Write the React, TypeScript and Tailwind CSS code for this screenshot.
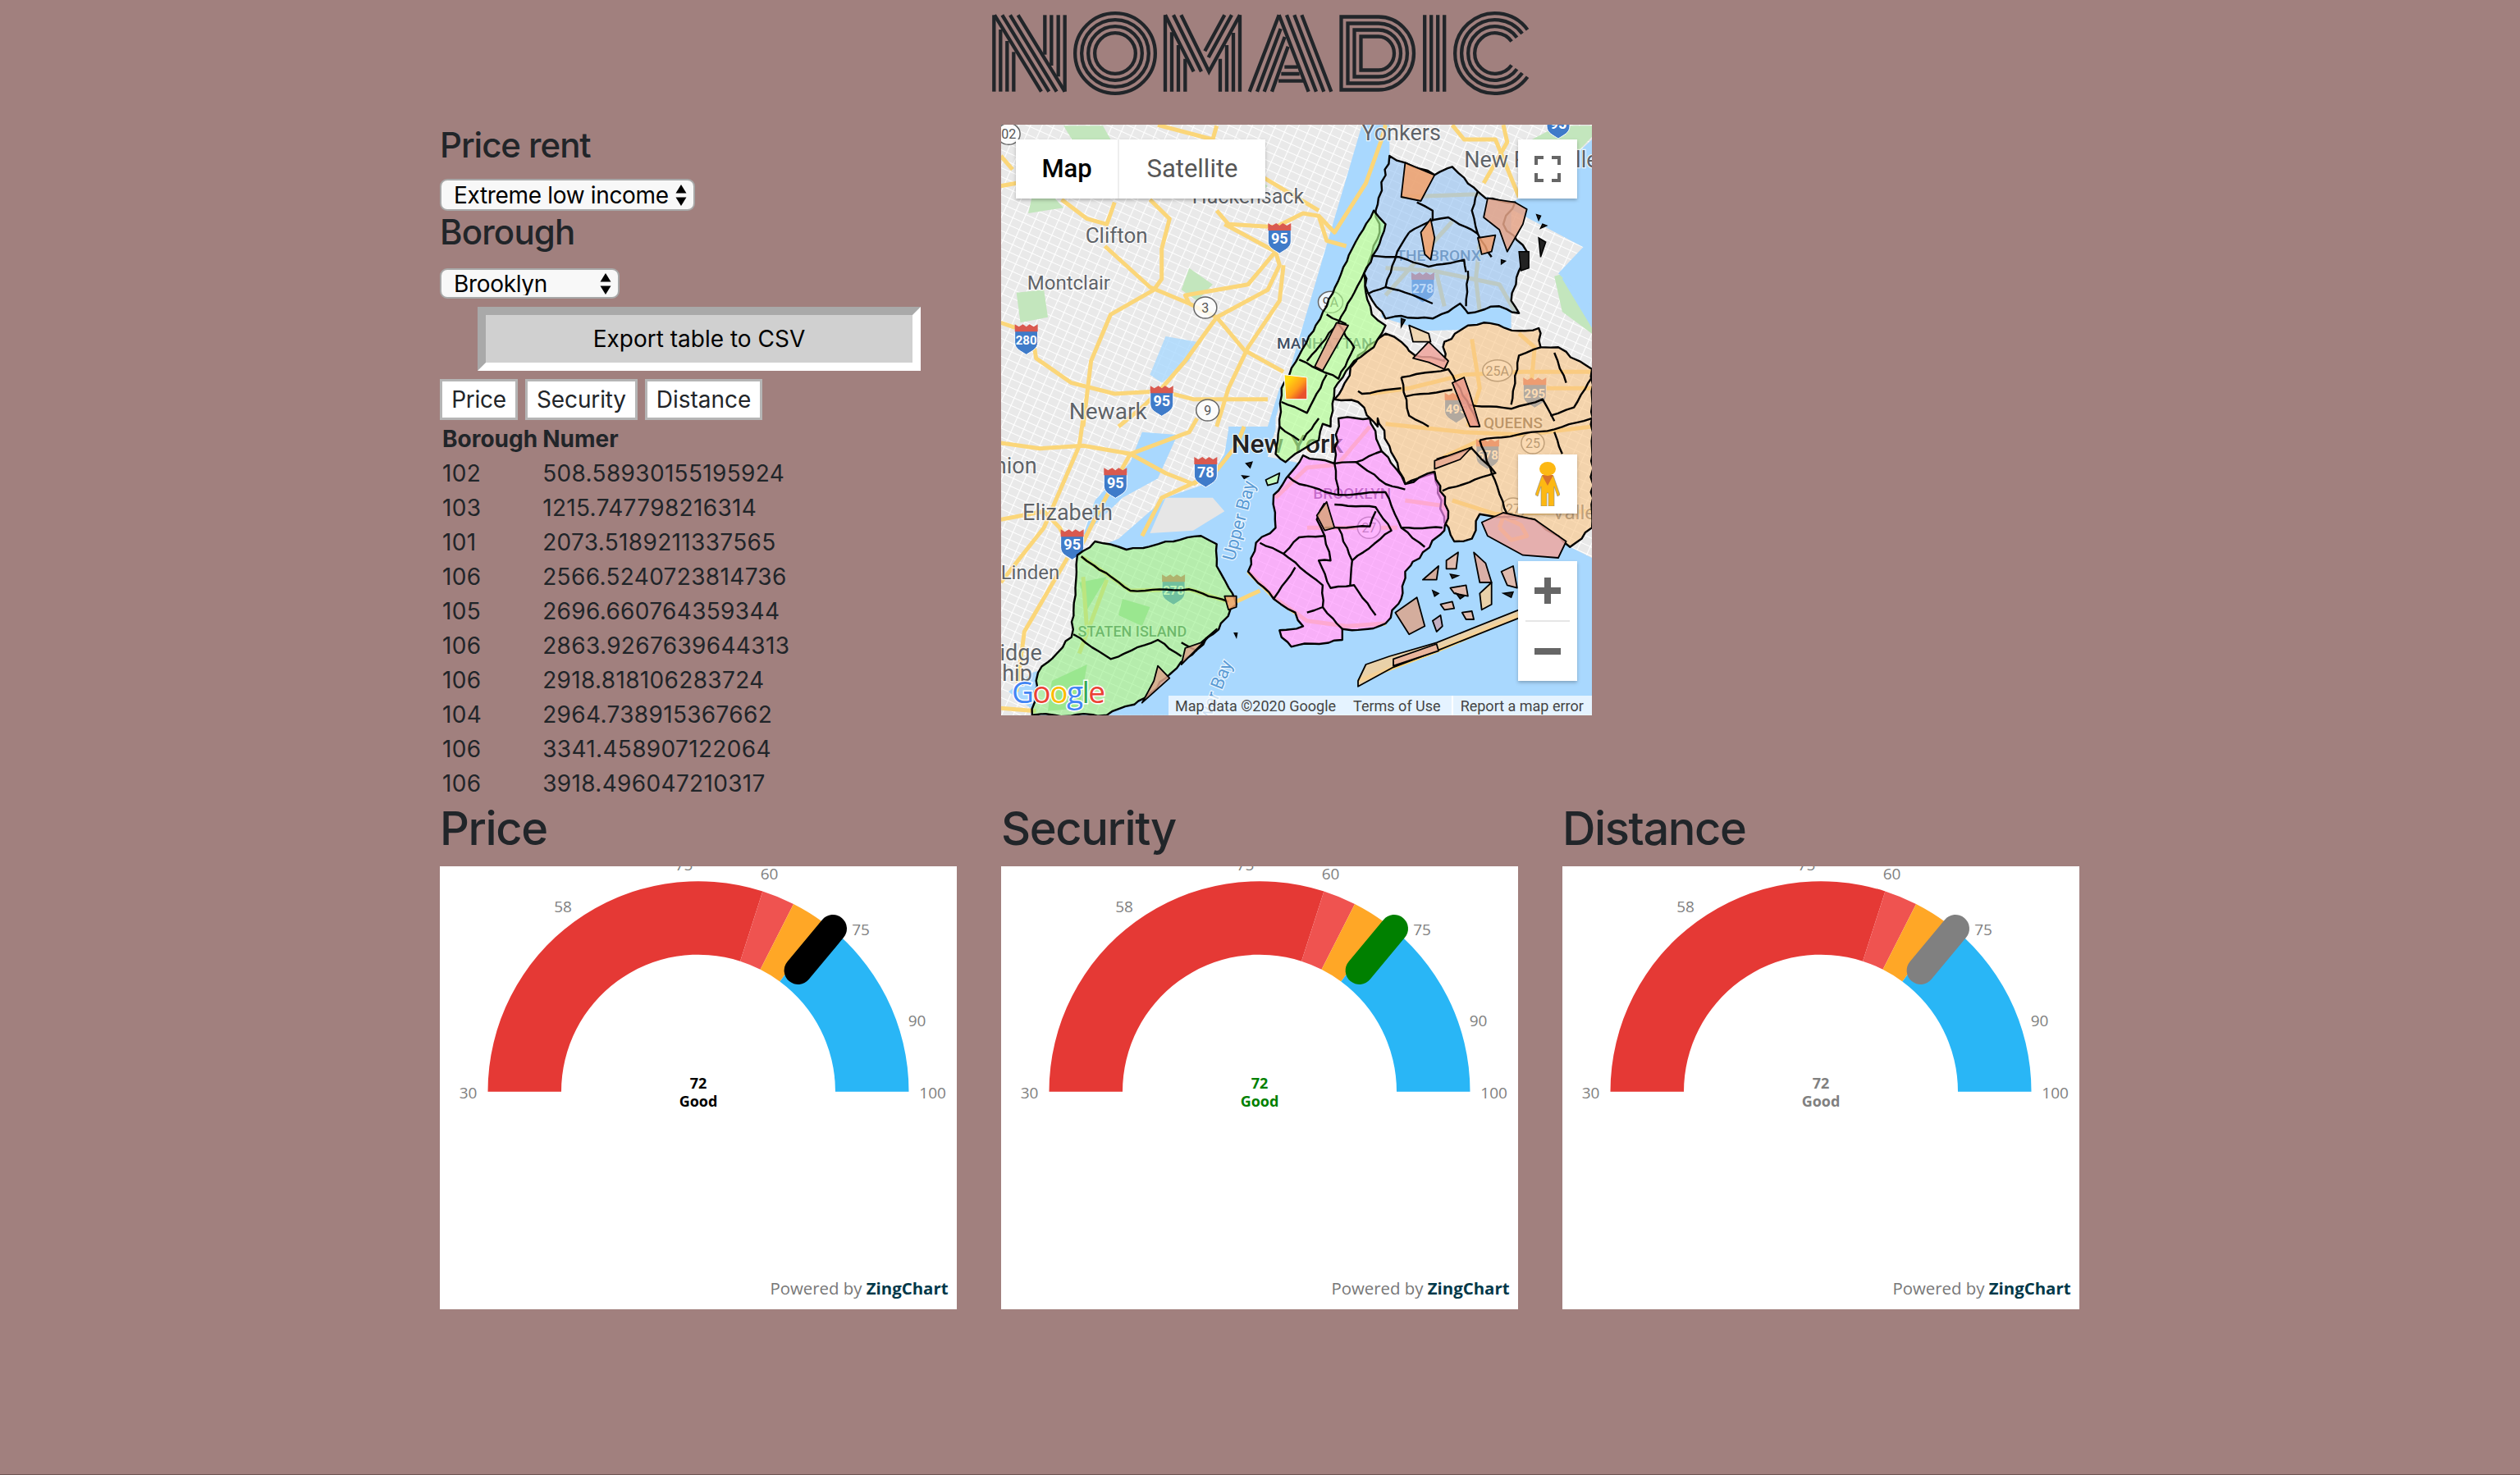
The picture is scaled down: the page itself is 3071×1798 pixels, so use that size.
import { useId } from "react";

// map art is authored in zoomed reference coords, converted to page pixels here
const conv = (s: string, oy: number) =>
    s.trim().split(/\s+/).map((p) => {
        const [x, y] = p.split(",").map(Number);
        return `${(1210 + x / 2.09).toFixed(1)},${(oy + y / 3).toFixed(1)}`;
    }).join(" ");
const a = (s: string) => conv(s, 140);
const b = (s: string) => conv(s, 510);
const ptA = (x: number, y: number) => ({ x: 1210 + x / 2.09, y: 140 + y / 3 });
const ptB = (x: number, y: number) => ({ x: 1210 + x / 2.09, y: 510 + y / 3 });

// breaks long edges up a little so the shorelines don't look ruler straight
const rough = (s: string, amount = 1.6, closed = true) => {
    const pts = s.trim().split(/\s+/).map((p) => p.split(",").map(Number));
    const out: string[] = [];
    pts.forEach(([x, y], i) => {
        if (!closed && i === pts.length - 1) {
            out.push(`${x},${y}`);
            return;
        }
        const [nx, ny] = pts[(i + 1) % pts.length];
        const steps = Math.max(1, Math.round(Math.hypot(nx - x, ny - y) / 9));
        for (let k = 0; k < steps; k++) {
            const t = k / steps;
            const jx = k === 0 ? 0 : Math.sin(x * 12.9 + k * 78.2) * amount;
            const jy = k === 0 ? 0 : Math.sin(y * 39.3 + k * 17.7) * amount;
            out.push(`${(x + (nx - x) * t + jx).toFixed(1)},${(y + (ny - y) * t + jy).toFixed(1)}`);
        }
    });
    return out.join(" ");
};

const rows = [
    ["102", "508.58930155195924"],
    ["103", "1215.747798216314"],
    ["101", "2073.5189211337565"],
    ["106", "2566.5240723814736"],
    ["105", "2696.660764359344"],
    ["106", "2863.9267639644313"],
    ["106", "2918.818106283724"],
    ["104", "2964.738915367662"],
    ["106", "3341.458907122064"],
    ["106", "3918.496047210317"],
];

const Logo = () => {
    const rings = [48.85, 40.85, 32.85, 24.85];
    const leftN = [[58, 78], [82, 120], [106, 160]];
    const rightN = [[220, 170], [244, 210], [269, 250]];
    const c = { x: 1822, y: 65 };
    return (
        <svg width={681} height={110} viewBox="1195 10 681 110" fill="none" stroke="#212529" strokeWidth={4.3}>
            {/* N */}
            <g transform="translate(1200 10) scale(0.3333)" strokeWidth={13}>
                <path d="M34 25V305" />
                <path d="M36 25L207 305M64 25L235 305M93 25L263 305M122 25L293 305" />
                {leftN.map(([x, y]) => <path key={x} d={`M${x} ${y}V305`} />)}
                {rightN.map(([x, y]) => <path key={x} d={`M${x} 25V${y}`} />)}
                <path d="M293 25V305" />
            </g>
            {/* O */}
            {rings.map((r) => <circle key={r} cx={1359} cy={65} r={r} />)}
            {/* M */}
            <g transform="translate(1410 10) scale(0.3333)" strokeWidth={13}>
                <path d="M30 25V305M54 88V305M78 135V305M103 185V305" />
                <path d="M303 25V305M279 90V305M255 135V305M231 185V305" />
                <path d="M30 25L134 232M60 25L162 232M88 25L190 232L303 25" />
                <path d="M273 25L188 180M247 25L175 157" />
            </g>
            {/* A */}
            <g transform="translate(1518 10) scale(0.3333)" strokeWidth={13}>
                <path d="M122 25L230 305M150 25L258 305M178 25L286 305M205 25L313 305" />
                <path d="M122 25L14 305M128 75L42 305M143 105L68 305M155 140L96 305" />
                <path d="M142 215H190M130 240H197M120 266H210" />
            </g>
            {/* D */}
            <path d="M1634.5 20.5H1680A43 44.5 0 0 1 1680 109.5H1634.5Z" />
            <path d="M1642.5 28.5H1680A35 36.5 0 0 1 1680 101.5H1642.5Z" />
            <path d="M1650.5 36.5H1680A27 28.5 0 0 1 1680 93.5H1650.5Z" />
            <path d="M1658.5 44.5H1680A19 20.5 0 0 1 1680 85.5H1658.5Z" />
            {/* I */}
            <path d="M1736.2 18.3V111.7M1744.2 18.3V111.7M1752.2 18.3V111.7M1760.2 18.3V111.7" />
            {/* C */}
            {rings.map((r) => {
                const dx = r * Math.cos((36 * Math.PI) / 180);
                const dy = r * Math.sin((36 * Math.PI) / 180);
                return <path key={r} d={`M${c.x + dx} ${c.y - dy}A${r} ${r} 0 1 0 ${c.x + dx} ${c.y + dy}`} />;
            })}
        </svg>
    );
};

const Shield = ({ x, y, label }: { x: number; y: number; label: string }) => (
    <g>
        <path d={`M${x - 14} ${y - 12}H${x + 14}V${y + 4}C${x + 14} ${y + 12} ${x + 6} ${y + 15} ${x} ${y + 19}C${x - 6} ${y + 15} ${x - 14} ${y + 12} ${x - 14} ${y + 4}Z`} fill="#3f7bc9" stroke="#fff" strokeWidth={1} />
        <path d={`M${x - 14} ${y - 18}L${x - 9} ${y - 15}L${x - 4} ${y - 18}L${x} ${y - 15}L${x + 4} ${y - 18}L${x + 9} ${y - 15}L${x + 14} ${y - 18}V${y - 9}H${x - 14}Z`} fill="#d9594f" />
        <text x={x} y={y + 7} textAnchor="middle" fontSize={label.length > 2 ? 15 : 18} fontWeight={700} fill="#fff" fontFamily="Roboto, sans-serif">{label}</text>
    </g>
);

const RoundSign = ({ x, y, label, r = 14 }: { x: number; y: number; label: string; r?: number }) => (
    <g>
        <ellipse cx={x} cy={y} rx={r} ry={13} fill="#fff" fillOpacity={0.8} stroke="#666" strokeWidth={1.5} />
        <text x={x} y={y + 6} textAnchor="middle" fontSize={16} fill="#555" fontFamily="Roboto, sans-serif">{label}</text>
    </g>
);

type LabelProps = { at: { x: number; y: number }; size: number; color?: string; weight?: number; anchor?: "start" | "middle" | "end"; rotate?: number; children: string };

const Label = ({ at, size, color = "#5f6368", weight = 400, anchor = "middle", rotate, children }: LabelProps) => (
    <text
        x={at.x}
        y={at.y}
        fontSize={size}
        fill={color}
        fontWeight={weight}
        textAnchor={anchor}
        dominantBaseline="middle"
        fontFamily="Roboto, sans-serif"
        stroke="#ffffff"
        strokeOpacity={0.75}
        strokeWidth={2.5}
        className="[paint-order:stroke]"
        transform={rotate ? `rotate(${rotate} ${at.x} ${at.y})` : undefined}
    >
        {children}
    </text>
);

const bronx = rough(a("1010,150 1050,175 1125,220 1170,190 1200,230 1235,280 1255,305 1330,320 1300,400 1360,500 1340,570 1320,680 1340,725 1290,700 1210,725 1190,690 1160,720 1120,745 1040,735 1000,745 955,650 945,580 965,510 985,430 975,350"));
const manhattan = rough([
    a("970,350 1000,400 985,470 945,580 950,650 965,730 1000,770 970,850 920,900 870,1000 860,1140"),
    b("840,20 830,80 770,130 745,160 720,130 730,30"),
    a("730,1140 735,1000 780,880 850,700 915,490"),
].join(" "), 0.8);
const queens = rough([
    a("1150,830 1210,770 1250,760 1340,790 1390,780 1395,850 1440,850 1526,930 1526,1140"),
    b("1526,0 1526,400 1470,470 1380,370 1240,350 1220,440 1175,450 1150,380 1125,200 1050,240 980,0"),
    a("980,1140 930,1050 870,1040 890,1000 930,880 1000,800 1040,830 1075,880 1150,900"),
].join(" "));
const brooklyn = rough(b("880,0 960,0 990,120 1030,190 1050,240 1125,195 1160,340 1150,410 1095,490 1050,560 1040,660 1000,750 955,770 890,770 890,810 760,835 735,800 730,775 790,760 770,710 715,660 650,560 670,455 720,400 715,280 770,180 790,135 870,165"));
const staten = rough(b("215,500 260,450 340,480 460,450 530,430 570,460 570,540 610,640 620,680 560,790 440,950 390,1020 290,1085 100,1085 115,930 200,800 210,620"));

const regions = [
    { points: queens, fill: "#f8c586", opacity: 0.62 },
    { points: bronx, fill: "#96c4f4", opacity: 0.62 },
    { points: manhattan, fill: "#b2ff92", opacity: 0.66 },
    { points: brooklyn, fill: "#ff90ff", opacity: 0.66 },
    { points: staten, fill: "#93ee84", opacity: 0.6 },
];

const districtLines = [
    a("965,515 1035,520 1110,555 1200,530 1205,575"),
    a("1060,430 1030,500 1000,630 955,655"),
    a("1000,630 1050,650 1120,690"),
    a("1120,385 1160,375 1235,435"),
    a("1210,570 1205,700"),
    a("1080,320 1120,350 1120,385 1060,430"),
    a("1235,280 1220,350 1235,435 1270,520"),
    a("945,580 880,760 800,900"),
    a("880,765 920,850 880,965 780,895"),
    a("850,730 900,765"),
    a("850,950 800,1090 735,1050"),
    b("790,80 830,0"),
    b("730,30 780,80"),
    a("1040,960 1160,930 1190,1000 1240,1140"),
    a("1050,1030 1170,1005"),
    a("1320,1060 1340,880 1395,850"),
    a("1430,870 1460,980"),
    a("1526,960 1480,1070 1420,1100"),
    a("1040,960 1060,1100 1110,1140"),
    a("1210,1060 1320,1075 1400,1040 1430,1120"),
    a("930,1010 940,1020 1040,1000"),
    b("1240,80 1430,40 1526,0"),
    b("1130,150 1220,110 1280,200 1145,265"),
    b("1240,80 1310,350"),
    b("1430,50 1450,130"),
    b("870,165 925,160 990,120"),
    b("870,165 880,280 780,240 750,210"),
    b("925,160 1000,240 1050,260"),
    b("880,280 1000,270 1040,400 1145,400"),
    b("870,315 975,325 1015,410 915,520"),
    b("845,310 825,370 845,430 780,435 740,495 680,455"),
    b("845,400 960,395 975,340"),
    b("845,430 860,520 830,520 860,620 920,610 975,720"),
    b("740,495 840,610 840,690 800,710"),
    b("770,545 715,660"),
    b("880,400 915,520 910,610"),
    b("1040,400 1100,470"),
    b("840,690 890,770"),
    b("225,505 350,630 500,625 600,670"),
    b("205,790 300,880 420,810 480,870"),
    b("480,820 520,850"),
];

const highways = [
    a("175,310 240,380 290,400 310,320"),
    a("400,310 450,380 430,490 430,600 410,640 300,730 250,900 230,1140"),
    a("285,480 400,630 500,690 570,740 640,860 740,940"),
    a("570,350 600,400 720,410 790,360 830,370 850,460 900,480"),
    a("590,400 720,500 730,550 700,640 570,740 490,900 430,1000"),
    a("740,550 730,680 650,850 600,1000 570,1140"),
    a("720,500 650,620 490,660 500,690"),
    a("830,370 870,430 950,250 990,90 1000,37"),
    a("420,37 560,90 570,40"),
    a("690,230 830,350"),
    a("20,760 100,800 110,890 200,980 310,1020 430,1010 510,1040 700,1040"),
    a("20,260 60,250"),
    a("20,150 50,200"),
    a("430,1000 380,1070 320,1140"),
    a("1170,37 1200,90 1280,90 1340,300"),
    a("1300,37 1310,100 1250,250"),
    a("1040,300 1240,290"),
    a("1000,560 1120,570 1290,620 1330,720"),
    a("1170,390 1000,660"),
    a("1240,470 1230,600 1240,720"),
    a("1130,580 1150,700"),
    a("960,1020 1060,1000 1200,950 1350,940 1526,940"),
    a("1220,820 1240,1000 1210,1140"),
    a("1340,800 1380,850 1370,1000 1526,1000"),
    b("20,90 120,110 230,100 350,130 440,200 510,240"),
    b("220,100 130,400 20,600"),
    b("350,130 280,310 220,480"),
    b("230,0 220,100"),
    b("510,240 570,190 620,100 640,30"),
    b("520,0 500,50 350,130"),
    b("20,370 130,340 170,400 200,480"),
    b("190,510 80,780 60,1000"),
    b("620,670 680,630"),
    b("380,430 430,290 520,230"),
    b("20,1060 110,1070"),
    b("1000,20 1200,50 1350,60 1526,30"),
    b("1170,300 1280,350 1526,340"),
    b("1240,80 1150,140"),
    b("720,290 800,180 870,170"),
    b("880,165 960,30"),
    b("650,560 720,660 800,740 900,760 1000,750"),
    b("1050,300 1150,320"),
    b("1030,400 880,400 800,400"),
    b("230,580 240,780"),
    b("290,590 220,860"),
    b("225,505 350,630 500,625 600,670"),
    b("1290,400 1300,360 1345,390 1360,430 1320,445 1290,400"),
    b("930,960 1130,850 1340,720"),
];

const parks = [
    a("60,650 130,640 140,740 70,760"),
    a("500,560 560,620 520,680 480,640"),
    a("1360,100 1440,40 1526,40 1526,80 1420,240 1340,240"),
    a("1430,590 1500,560 1526,700 1526,800 1450,720"),
    a("180,40 280,40 300,90 210,110"),
    a("640,200 700,260 660,310"),
    a("110,230 180,340 90,360"),
    b("1480,620 1526,600 1526,700 1490,700"),
];

const innerParks = [
    b("330,660 400,690 380,760 320,720"),
    b("220,600 290,580 240,700"),
    b("150,960 240,900 220,1060 140,1070"),
];

// the small pieces that sit over the districts: parks, airports and bay islands
const patches = [
    { p: a("1050,175 1125,220 1090,315 1040,300"), f: "#f5a26a" },
    { p: a("1115,380 1090,430 1100,510 1115,530 1125,450"), f: "#f5a26a" },
    { p: a("1260,305 1330,320 1360,345 1350,400 1310,500 1290,420 1250,375"), f: "#e5a588" },
    { p: a("1235,450 1280,440 1270,500 1245,510"), f: "#f0a070" },
    { p: a("875,760 905,770 840,935 820,920"), f: "#e9a390" },
    { p: a("1070,890 1110,830 1160,900 1150,930 1110,905"), f: "#eea49c" },
    { p: a("1170,980 1200,960 1215,1020 1240,1140 1215,1140"), f: "#ea9888" },
    { p: a("1060,770 1110,800 1115,830 1070,830"), f: "#efd2a8" },
    { p: b("1125,185 1125,155 1220,105 1190,150"), f: "#e8a890" },
    { p: b("850,305 870,400 845,410 825,355"), f: "#d9a37e" },
    { p: b("590,650 620,650 620,690 600,700"), f: "#f5a26a" },
    { p: b("420,905 450,950 380,1040 410,960"), f: "#dca68c" },
    { p: b("570,770 480,900 490,840 530,820"), f: "#dca68c" },
    { p: b("1245,380 1300,345 1380,370 1460,450 1440,510 1350,500 1260,430"), f: "#f0a8a0" },
    { p: b("1025,710 1080,655 1100,760 1060,790"), f: "#dca68c" },
    { p: b("930,960 950,900 1010,870 1130,820 1340,700 1340,730 1130,850 1020,910 930,980"), f: "#f5d09a" },
    { p: b("1020,880 1130,825 1135,850 1020,905"), f: "#eab09a" },
    { p: b("1095,590 1135,540 1130,590"), f: "#dca68c" },
    { p: b("1225,490 1255,530 1270,600 1240,600"), f: "#e3a898" },
    { p: b("1120,740 1140,720 1145,760 1130,780"), f: "#c9a8b8" },
    { p: b("1140,680 1170,670 1175,695 1150,700"), f: "#eab6a0" },
    { p: b("1295,560 1325,540 1335,620 1310,610"), f: "#eab6a0" },
    { p: b("1155,520 1185,490 1180,550 1155,550"), f: "#eab6a0" },
    { p: b("1195,710 1220,705 1225,735 1205,735"), f: "#eab6a0" },
    { p: b("1165,620 1205,610 1210,650 1175,640"), f: "#eab6a0" },
    { p: b("1240,640 1270,600 1270,680 1245,700"), f: "#f5d09a" },
    { p: b("695,225 730,200 725,235 700,245"), f: "#c9ffb5" },
];

const specks = [
    a("1385,365 1395,370 1390,385"),
    a("1400,400 1410,405 1395,415"),
    a("1390,450 1408,465 1395,520"),
    a("1340,500 1365,500 1365,560 1345,570"),
    a("1295,530 1305,535 1295,545"),
    a("1040,745 1050,750 1040,775"),
    b("645,165 660,160 655,180"),
    b("635,210 650,212 640,220"),
    b("615,785 622,785 620,800"),
    b("1120,630 1135,640 1125,650"),
    b("1180,640 1200,650 1190,660"),
    b("1300,640 1325,635 1320,655"),
    b("1165,570 1185,575 1170,585"),
];

const MapArt = () => {
    const id = useId().replace(/:/g, "");
    const grid = `grid${id}`;
    const flag = `flag${id}`;
    return (
        <svg width={720} height={720} viewBox="1220 152 720 720" className="block">
            <defs>
                <pattern id={grid} width={13} height={10} patternUnits="userSpaceOnUse" patternTransform="rotate(24)">
                    <rect width={13} height={10} fill="#e9e9e9" />
                    <path d="M0 0H13M0 0V10" stroke="#fff" strokeWidth={2.2} />
                </pattern>
                <linearGradient id={flag} x1="0" y1="0" x2="1" y2="1">
                    <stop offset="0.2" stopColor="#ffd90f" />
                    <stop offset="0.55" stopColor="#ff9d1a" />
                    <stop offset="0.8" stopColor="#e9502a" />
                </linearGradient>
            </defs>
            <rect x={1220} y={152} width={720} height={720} fill={`url(#${grid})`} />
            {parks.map((p) => <polygon key={p} points={p} fill="#c3e6bd" />)}

            {/* water */}
            <g fill="#a9d8fe">
                <polygon points={a("940,37 1010,37 1010,350 915,520 850,700 780,880 730,1000 700,1140 600,1140") + " " + b("600,40 590,130 540,240 440,290 320,440 230,490 210,760 170,900 100,930 40,1000 120,1085 1526,1085 1526,380 700,140 720,40 720,0")} />
                <polygon points={a("1526,90 1400,260 1320,320 1320,780 1100,790 990,740 1000,400 1260,300 1526,500 1450,600 1526,780")} />
                <polygon points={b("380,50 470,60 420,220 330,290 230,430 260,300 350,160")} />
                <polygon points={a("440,810 520,830 500,900 430,980 400,950")} fillOpacity={0.8} />
                <polygon points={a("1526,450 1440,580 1526,700")} />
            </g>
            <polygon points={b("400,420 440,290 560,290 590,340 510,410")} fill="#e6e6e6" />
            <polygon points={b("1526,390 1526,510 1470,470")} fill={`url(#${grid})`} />

            {/* land under the districts */}
            {regions.map((r) => <polygon key={r.fill} points={r.points} fill={`url(#${grid})`} />)}
            {innerParks.map((p) => <polygon key={p} points={p} fill="#a6dba0" />)}

            <g fill="none" stroke="#fbd679" strokeWidth={5} strokeLinejoin="round">
                {highways.map((r) => <polyline key={r} points={r} />)}
            </g>

            {/* shields and signs */}
            <Shield {...ptA(730, 450)} label="95" />
            <Shield {...ptA(85, 820)} label="280" />
            <Shield {...ptA(1095, 630)} label="278" />
            <Shield {...ptA(430, 1045)} label="95" />
            <Shield {...ptA(1380, 1015)} label="295" />
            <Shield {...ptA(1180, 1070)} label="495" />
            <Shield {...ptA(1440, 30)} label="95" />
            <Shield {...ptB(1260, 130)} label="678" />
            <Shield {...ptB(312, 235)} label="95" />
            <Shield {...ptB(542, 195)} label="78" />
            <Shield {...ptB(202, 460)} label="95" />
            <Shield {...ptB(460, 625)} label="278" />
            <RoundSign {...ptA(541, 705)} label="3" />
            <RoundSign {...ptA(547, 1080)} label="9" />
            <RoundSign {...ptA(860, 685)} label="9A" r={15} />
            <RoundSign {...ptA(1285, 935)} label="25A" r={18} />
            <RoundSign {...ptB(1375, 90)} label="25" />
            <RoundSign {...ptB(958, 400)} label="27" />
            <RoundSign {...ptB(1325, 330)} label="27" />
            <RoundSign {...ptA(40, 70)} label="02" />

            {/* labels */}
            <Label at={ptA(1040, 72)} size={27}>Yonkers</Label>
            <Label at={ptA(1200, 172)} size={27} anchor="start">New Rochelle</Label>
            <Label at={ptA(650, 305)} size={25}>Hackensack</Label>
            <Label at={ptA(315, 448)} size={26}>Clifton</Label>
            <Label at={ptA(193, 620)} size={24}>Montclair</Label>
            <Label at={ptA(293, 1090)} size={28}>Newark</Label>
            <Label at={ptA(845, 840)} size={19} weight={500} color="#3f4f64">MANHATTAN</Label>
            <Label at={ptA(1135, 520)} size={19} weight={500} color="#3f5f80">THE BRONX</Label>
            <Label at={ptB(1325, 20)} size={19} weight={500} color="#5a4a3a">QUEENS</Label>
            <Label at={ptB(750, 100)} size={32} weight={500} color="#222">New York</Label>
            <Label at={ptB(112, 180)} size={27} anchor="end">Union</Label>
            <Label at={ptB(190, 350)} size={27}>Elizabeth</Label>
            <Label at={ptB(95, 570)} size={24}>Linden</Label>
            <Label at={ptB(125, 865)} size={27} anchor="end">Woodbridge</Label>
            <Label at={ptB(100, 940)} size={27} anchor="end">Township</Label>
            <Label at={ptB(355, 785)} size={18} weight={500} color="#3a6a4a">STATEN ISLAND</Label>
            <Label at={ptB(915, 280)} size={19} weight={500} color="#5a2a6a">BROOKLYN</Label>
            <Label at={ptB(630, 375)} size={22} color="#5a9bd5" rotate={-75}>Upper Bay</Label>
            <Label at={ptB(560, 1030)} size={22} color="#5a9bd5" rotate={-68}>Lower Bay</Label>
            <Label at={ptB(1425, 350)} size={24} anchor="start">Valley Stream</Label>

            {/* districts over the base map */}
            {regions.map((r) => (
                <polygon key={r.fill} points={r.points} fill={r.fill} fillOpacity={r.opacity} stroke="#000" strokeWidth={2.4} strokeLinejoin="round" />
            ))}
            <g fill="none" stroke="#000" strokeWidth={2.4} strokeLinejoin="round">
                {districtLines.map((l) => <polyline key={l} points={rough(l, 0.8, false)} />)}
            </g>
            <g stroke="#000" strokeWidth={1.8} strokeLinejoin="round" fillOpacity={0.85}>
                {patches.map((s) => <polygon key={s.p} points={s.p} fill={s.f} />)}
            </g>
            <g fill="#222" stroke="#000" strokeWidth={1.5}>
                {specks.map((s) => <polygon key={s} points={s} />)}
            </g>
            <polygon points={a("742,950 800,960 800,1040 746,1040")} fill={`url(#${flag})`} stroke="#fff" strokeWidth={1} />

            {/* google wordmark */}
            <text y={ptB(0, 1040).y} fontSize={37} fontFamily="'Open Sans', sans-serif" stroke="#fff" strokeWidth={3} className="[paint-order:stroke]" letterSpacing={-1.5}>
                <tspan x={ptB(48, 0).x} fill="#4285f4">G</tspan>
                <tspan fill="#ea4335">o</tspan>
                <tspan fill="#fbbc05">o</tspan>
                <tspan fill="#4285f4">g</tspan>
                <tspan fill="#34a853">l</tspan>
                <tspan fill="#ea4335">e</tspan>
            </text>
        </svg>
    );
};

const MapBox = () => (
    <div className="relative w-[720px] h-[720px] overflow-hidden">
        <MapArt />
        <div className="absolute left-[18px] top-[18px] flex h-[72px] bg-white font-[Roboto,sans-serif] text-[31px] shadow-[0_2px_4px_rgba(0,0,0,0.25)]">
            <div className="w-[126px] flex items-center justify-center font-medium text-black border-r-2 border-[#eeeeee]">Map</div>
            <div className="w-[178px] flex items-center justify-center text-[#565656]">Satellite</div>
        </div>
        <div className="absolute left-[630px] top-[18px] w-[72px] h-[72px] bg-white flex items-center justify-center shadow-[0_2px_4px_rgba(0,0,0,0.25)]">
            <svg width={32} height={32} viewBox="0 0 32 32" fill="none" stroke="#666" strokeWidth={4}>
                <path d="M2 11V2H11M21 2H30V11M30 21V30H21M11 30H2V21" />
            </svg>
        </div>
        <div className="absolute left-[630px] top-[402px] w-[72px] h-[72px] bg-white flex items-center justify-center shadow-[0_2px_4px_rgba(0,0,0,0.25)]">
            <svg width={30} height={54} viewBox="0 0 30 54">
                <path d="M8 17H22L30 40L27 42L23 30V54H16V38H14V54H7V30L3 42L0 40Z" fill="#fdb813" stroke="#8a8a8a" strokeWidth={0.6} />
                <path d="M8 16L15 29L22 16Z" fill="#d9722a" />
                <ellipse cx={15} cy={8.5} rx={10} ry={8.5} fill="#fdb813" />
            </svg>
        </div>
        <div className="absolute left-[630px] top-[532px] w-[72px] h-[146px] bg-white flex flex-col items-center shadow-[0_2px_4px_rgba(0,0,0,0.25)]">
            <div className="h-[72px] flex items-center justify-center">
                <svg width={32} height={32} viewBox="0 0 32 32" fill="#666"><path d="M12 0H20V12H32V20H20V32H12V20H0V12H12Z" /></svg>
            </div>
            <div className="w-[54px] h-[2px] bg-[#e6e6e6]" />
            <div className="h-[72px] flex items-center justify-center">
                <div className="w-[32px] h-[8px] bg-[#666]" />
            </div>
        </div>
        <div className="absolute right-0 bottom-0 h-[24px] w-[516px] flex items-center bg-white/70 font-[Roboto,sans-serif] text-[18px] text-[#444] whitespace-nowrap">
            <span className="ml-[8px]">Map data ©2020 Google</span>
            <span className="ml-[21px]">Terms of Use</span>
            <span className="ml-[13px] h-full w-[2px] bg-white" />
            <span className="ml-[9px]">Report a map error</span>
        </div>
    </div>
);

const Arrows = () => (
    <svg className="absolute right-[10px] top-1/2 -translate-y-1/2 pointer-events-none" width={14} height={26} viewBox="0 0 14 26" fill="#000">
        <path d="M7 0L13.5 10.5H0.5Z" />
        <path d="M7 26L13.5 15.5H0.5Z" />
    </svg>
);

const SelectBox = ({ options, width, height }: { options: string[]; width: string; height: string }) => (
    <div className={`relative ${width} ${height}`}>
        <select className="appearance-none w-full h-full bg-[#f8f8f8] border-2 border-[#a8a8a8] rounded-[9px] pl-[15px] text-[28px] leading-none text-black tracking-[-0.012em]">
            {options.map((o) => <option key={o}>{o}</option>)}
        </select>
        <Arrows />
    </div>
);

const polar = (deg: number, r: number) => {
    const t = (deg * Math.PI) / 180;
    return `${(315 + r * Math.sin(t)).toFixed(2)} ${(274.7 - r * Math.cos(t)).toFixed(2)}`;
};

const band = (from: number, to: number) =>
    `M${polar(from, 256.5)}A256.5 256.5 0 0 1 ${polar(to, 256.5)}L${polar(to, 167)}A167 167 0 0 0 ${polar(from, 167)}Z`;

const segments = [
    { from: -90, to: 17.8, fill: "#e53935" },
    { from: 17.8, to: 26.9, fill: "#ef5350" },
    { from: 26.9, to: 36.5, fill: "#ffa726" },
    { from: 36.5, to: 90, fill: "#29b6f6" },
];

const ticks = [
    { x: 34.5, y: 276, t: "30" },
    { x: 150, y: 49, t: "58" },
    { x: 297.5, y: -2, t: "75" },
    { x: 401.5, y: 9, t: "60" },
    { x: 513, y: 77, t: "75" },
    { x: 581.6, y: 188, t: "90" },
    { x: 600.6, y: 276, t: "100" },
];

const Gauge = ({ title, color }: { title: string; color: string }) => (
    <div>
        <h2 className="text-[56px] leading-[67px] font-medium text-[#212529] tracking-[-0.025em] mb-[12px]">{title}</h2>
        <svg width={630} height={540} viewBox="0 0 630 540" className="block bg-white" fontFamily="'Open Sans', sans-serif">
            {segments.map((s) => <path key={s.from} d={band(s.from, s.to)} fill={s.fill} />)}
            <line x1={436.6} y1={127} x2={479} y2={76} stroke={color} strokeWidth={34} strokeLinecap="round" />
            {ticks.map((t) => (
                <text key={t.x} x={t.x} y={t.y} textAnchor="middle" dominantBaseline="central" fontSize={19} fill="#808080">{t.t}</text>
            ))}
            <text x={315} y={264} textAnchor="middle" dominantBaseline="central" fontSize={18} fontWeight={700} fill={color}>72</text>
            <text x={315} y={286} textAnchor="middle" dominantBaseline="central" fontSize={18} fontWeight={700} fill={color}>Good</text>
            <text x={619.5} y={522} textAnchor="end" fontSize={20.4} fill="#777">
                Powered by <tspan fontWeight={700} fill="#003849">ZingChart</tspan>
            </text>
        </svg>
    </div>
);

const App = () => {
    return (
        <div className="min-h-[1798px] bg-[#a1807e] border-b border-[#6e5553] font-[Inter,sans-serif]">
            <div className="h-[152px] pt-[10px] flex justify-center">
                <Logo />
            </div>
            <div className="ml-[536px]">
                <div className="flex h-[825px]">
                    <div className="w-[684px]">
                        <h4 className="text-[42px] leading-[50px] font-medium text-[#212529] tracking-[-0.025em] mb-[16px]">Price rent</h4>
                        <SelectBox width="w-[311px]" height="h-[39px]" options={["Extreme low income", "Low income", "Medium income"]} />
                        <h4 className="text-[42px] leading-[50px] font-medium text-[#212529] tracking-[-0.02em] mt-[1px] mb-[19px]">Borough</h4>
                        <SelectBox width="w-[219px]" height="h-[37px]" options={["Brooklyn", "Bronx", "Manhattan", "Queens", "Staten Island"]} />
                        <button className="block ml-[46px] mt-[10px] w-[540px] h-[78px] border-[10px] border-t-[#a9a9a9] border-l-[#a9a9a9] border-r-white border-b-white bg-[#d0d0d0] text-[28px] text-black">
                            Export table to CSV
                        </button>
                        <div className="flex gap-[9px] mt-[10px]">
                            <button className="w-[95px] h-[50px] bg-white border-[3px] border-[#b5b5b5] text-[28px] text-[#212529] tracking-[-0.01em]">Price</button>
                            <button className="w-[137px] h-[50px] bg-white border-[3px] border-[#b5b5b5] text-[28px] text-[#212529] tracking-[-0.005em]">Security</button>
                            <button className="w-[143px] h-[50px] bg-white border-[3px] border-[#b5b5b5] text-[28px] text-[#212529]">Distance</button>
                        </div>
                        <table className="-ml-[1px] border-separate border-spacing-[4px] text-[28px] leading-[38px] text-[#212529] tracking-[0.012em]">
                            <thead>
                                <tr>
                                    <th className="p-0 pr-[2px] text-left font-bold tracking-normal">Borough</th>
                                    <th className="p-0 text-left font-bold tracking-normal">Numer</th>
                                </tr>
                            </thead>
                            <tbody>
                                {rows.map(([borough, value]) => (
                                    <tr key={value}>
                                        <td className="p-0">{borough}</td>
                                        <td className="p-0">{value}</td>
                                    </tr>
                                ))}
                            </tbody>
                        </table>
                    </div>
                    <MapBox />
                </div>
                <div className="grid grid-cols-[630px_630px_630px] gap-x-[54px]">
                    <Gauge title="Price" color="#000000" />
                    <Gauge title="Security" color="#008000" />
                    <Gauge title="Distance" color="#808080" />
                </div>
            </div>
        </div>
    );
};

export default App;
